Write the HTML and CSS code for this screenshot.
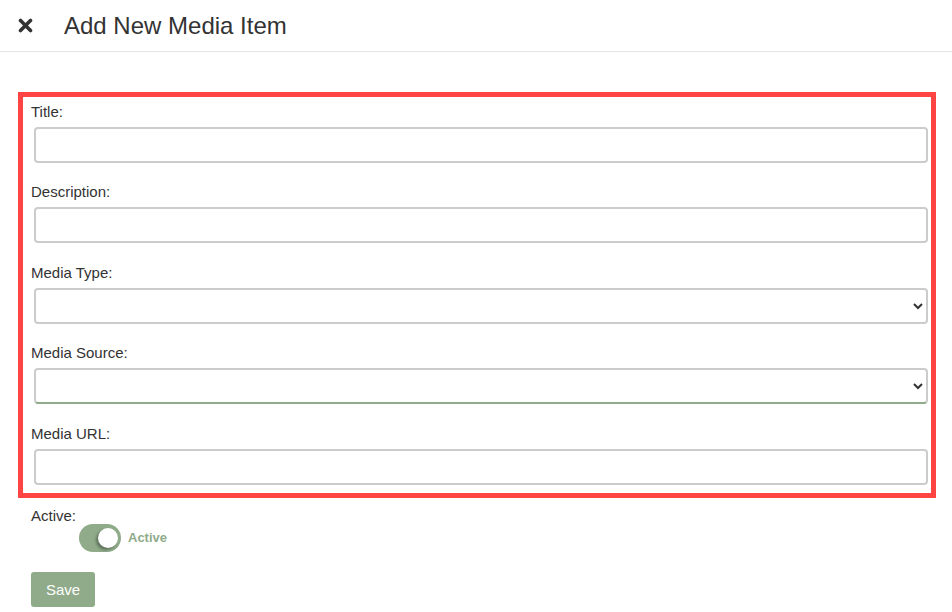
FILE: index.html
```html
<!DOCTYPE html>
<html lang="en">
<head>
<meta charset="utf-8">
<title>Add New Media Item</title>
<link rel="stylesheet" href="styles.css">
</head>
<body>
<header class="header">
  <svg class="close-icon" width="15" height="15" viewBox="0 0 15 15" aria-hidden="true">
    <path d="M2.5 2.5 L12.5 12.5 M12.5 2.5 L2.5 12.5" stroke="#333" stroke-width="3.6" stroke-linecap="round" fill="none"/>
  </svg>
  <h1 class="title">Add New Media Item</h1>
</header>

<main class="content">
  <form class="form-box">
    <div class="field">
      <label class="label" for="title">Title:</label>
      <input class="control" id="title" type="text">
    </div>
    <div class="field">
      <label class="label" for="desc">Description:</label>
      <input class="control" id="desc" type="text">
    </div>
    <div class="field">
      <label class="label" for="mtype">Media Type:</label>
      <select class="control select" id="mtype"><option></option></select>
    </div>
    <div class="field">
      <label class="label" for="msource">Media Source:</label>
      <select class="control select select-focus" id="msource"><option></option></select>
    </div>
    <div class="field">
      <label class="label" for="murl">Media URL:</label>
      <input class="control" id="murl" type="text">
    </div>
  </form>

  <div class="active-label">Active:</div>
  <div class="switch-row">
    <span class="switch"><span class="knob"></span></span>
    <span class="switch-text">Active</span>
  </div>

  <button class="save-btn" type="button">Save</button>
</main>
</body>
</html>
```

FILE: styles.css
```css
* { box-sizing: border-box; }

body {
  margin: 0;
  font-family: "Liberation Sans", Arial, sans-serif;
  color: #333;
  background: #fff;
}

.header {
  height: 52px;
  display: flex;
  align-items: center;
  padding-left: 18px;
  border-bottom: 1px solid #e6e6e6;
}

.close-icon {
  display: block;
  margin-right: 31px;
  flex-shrink: 0;
}

.title {
  margin: 0;
  font-size: 24px;
  font-weight: normal;
  color: #333;
  line-height: 28px;
}

.content {
  padding-left: 18px;
  padding-right: 16px;
}

.form-box {
  margin: 40px 0 0 0;
  border: 5px solid #ff4444;
  padding: 4.5px 3px 8px 8px;
}

.field {
  margin-bottom: 19.5px;
}
.field:last-child { margin-bottom: 0; }

.label {
  display: block;
  font-size: 15px;
  line-height: 20px;
  margin-bottom: 5px;
  color: #333;
}

.control {
  display: block;
  width: calc(100% - 3px);
  margin-left: 3px;
  height: 36px;
  border: 2px solid #cccccc;
  border-radius: 4px;
  background: #fff;
  font-family: inherit;
  font-size: 15px;
  padding: 0 8px;
  outline: none;
}

.select {
  padding-right: 6px;
  color: #333;
}

.select-focus {
  border-bottom-color: #8fab89;
}

.active-label {
  margin-top: 9px;
  padding-left: 13px;
  font-size: 15px;
  line-height: 17px;
}

.switch-row {
  display: flex;
  align-items: center;
  height: 28px;
  padding-left: 61px;
}

.switch {
  position: relative;
  width: 42px;
  height: 28px;
  border-radius: 14px;
  background: #8fab89;
  flex-shrink: 0;
}

.knob {
  position: absolute;
  top: 4px;
  right: 3px;
  width: 20px;
  height: 20px;
  border-radius: 50%;
  background: #fff;
  box-shadow: -2px 2px 3px rgba(0, 0, 0, 0.35);
}

.switch-text {
  margin-left: 7px;
  font-size: 13px;
  font-weight: bold;
  color: #8fab89;
  line-height: 16px;
}

.save-btn {
  display: block;
  margin: 20px 0 0 13px;
  height: 35px;
  padding: 0 15px;
  border: none;
  border-radius: 3px;
  background: #8fab89;
  color: #fff;
  font-family: inherit;
  font-size: 15px;
}
```
